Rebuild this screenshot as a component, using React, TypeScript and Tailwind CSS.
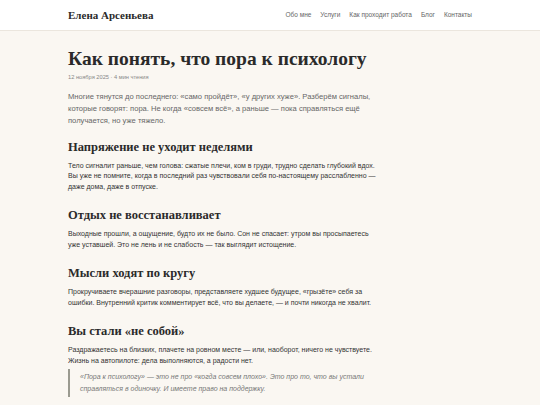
import React from "react";

const nav = ["Обо мне", "Услуги", "Как проходит работа", "Блог", "Контакты"];

const sections = [
    {
        title: "Напряжение не уходит неделями",
        text: "Тело сигналит раньше, чем голова: сжатые плечи, ком в груди, трудно сделать глубокий вдох. Вы уже не помните, когда в последний раз чувствовали себя по-настоящему расслабленно — даже дома, даже в отпуске.",
    },
    {
        title: "Отдых не восстанавливает",
        text: "Выходные прошли, а ощущение, будто их не было. Сон не спасает: утром вы просыпаетесь уже уставшей. Это не лень и не слабость — так выглядит истощение.",
    },
    {
        title: "Мысли ходят по кругу",
        text: "Прокручиваете вчерашние разговоры, представляете худшее будущее, «грызёте» себя за ошибки. Внутренний критик комментирует всё, что вы делаете, — и почти никогда не хвалит.",
    },
    {
        title: "Вы стали «не собой»",
        text: "Раздражаетесь на близких, плачете на ровном месте — или, наоборот, ничего не чувствуете. Жизнь на автопилоте: дела выполняются, а радости нет.",
    },
];

export default function App() {
    return (
        <div className="min-h-screen bg-[#faf7f2] font-['Liberation_Sans',sans-serif]">
            <header className="bg-white border-b border-[#ebe6de]">
                <div className="mx-auto w-[404px] h-[30px] flex items-center justify-between">
                    <span className="font-['Liberation_Serif',serif] font-bold text-[11px] text-[#2a2a2a]">
                        Елена Арсеньева
                    </span>
                    <nav className="flex gap-[9px] text-[6.5px] text-[#666]">
                        {nav.map((item) => (
                            <span key={item}>{item}</span>
                        ))}
                    </nav>
                </div>
            </header>

            <main className="mx-auto w-[404px] pt-[16px]">
                <div className="max-w-[310px]">
                    <h1 className="font-['Liberation_Serif',serif] font-bold text-[19.5px] leading-[24px] text-[#2a2a2a]">
                        Как понять, что пора к психологу
                    </h1>
                    <div className="mt-[2px] text-[5.7px] text-[#888]">
                        12 ноября 2025 · 4 мин чтения
                    </div>
                    <p className="mt-[9px] text-[7.6px] leading-[12px] text-[#666]">
                        Многие тянутся до последнего: «само пройдёт», «у других хуже». Разберём
                        сигналы, которые говорят: пора. Не когда «совсем всё», а раньше — пока
                        справляться ещё получается, но уже тяжело.
                    </p>

                    {sections.map((s, i) => (
                        <section key={s.title} className={i === 0 ? "mt-[11px]" : "mt-[14px]"}>
                            <h2 className="font-['Liberation_Serif',serif] font-bold text-[12.5px] leading-[18px] text-[#2a2a2a]">
                                {s.title}
                            </h2>
                            <p className="mt-[5px] text-[7px] leading-[10.5px] text-[#333]">
                                {s.text}
                            </p>
                        </section>
                    ))}

                    <blockquote className="mt-[3px] border-l-2 border-[#9a9a90] pl-[10px] py-[2px] italic text-[7px] leading-[12px] text-[#777]">
                        «Пора к психологу» — это не про «когда совсем плохо». Это про то, что вы
                        устали справляться в одиночку. И имеете право на поддержку.
                    </blockquote>
                </div>
            </main>
        </div>
    );
}
